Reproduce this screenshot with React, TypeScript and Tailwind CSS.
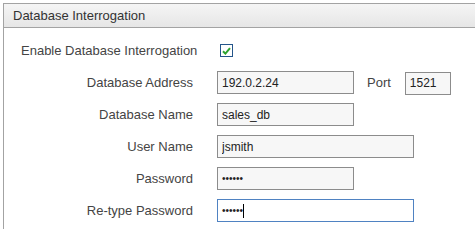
import React from "react";

const font = { fontFamily: '"Liberation Sans", Arial, sans-serif' };

function Row({ label, children }: { label: string; children: React.ReactNode }) {
  return (
    <div className="flex h-[23px] items-center">
      <label className="w-[189px] shrink-0 text-right text-[13px] text-[#444]">{label}</label>
      <div className="ml-[24px] flex h-full items-center">{children}</div>
    </div>
  );
}

function Field({ value, width, small = false, type = "text" }: { value: string; width: string; small?: boolean; type?: string }) {
  return (
    <input
      type={type}
      defaultValue={value}
      className={`${width} ${small ? "text-[10px]" : "text-[12px]"} h-[23px] border border-[#8c8c8c] bg-[#f7f7f7] px-[4px] text-[#222] outline-none`}
      style={font}
    />
  );
}

export default function App() {
  return (
    <div className="min-h-screen bg-white pl-[3px] pt-[3px]" style={font}>
      <div className="h-[226px] border-l border-t border-[#a3a3a3]">
        {/* panel header */}
        <div className="flex h-[24px] items-center border-b border-[#a3a3a3] bg-gradient-to-b from-[#f5f5f5] to-[#e6e6e6] pl-[9px] text-[13px] text-[#333]">
          Database Interrogation
        </div>

        <div className="flex flex-col gap-[9px] pt-[11px]">
          <div className="flex h-[23px] items-center">
            <span className="w-[189px] shrink-0 whitespace-nowrap pl-[17px] text-[13px] text-[#444]">Enable Database Interrogation</span>
            <span className="ml-[27px] flex h-[13px] w-[13px] items-center justify-center border border-[#24558a] bg-white">
              <svg width="9" height="8" viewBox="0 0 9 8">
                <path d="M1 4.2 L3.4 6.6 L8 1.2" fill="none" stroke="#2ea32e" strokeWidth="2" />
              </svg>
            </span>
          </div>

          <Row label="Database Address">
            <Field value="192.0.2.24" width="w-[137px]" />
            <span className="ml-[13px] text-[13px] text-[#444]">Port</span>
            <span className="ml-[14px]">
              <Field value="1521" width="w-[46px]" />
            </span>
          </Row>

          <Row label="Database Name">
            <Field value="sales_db" width="w-[137px]" />
          </Row>

          <Row label="User Name">
            <Field value="jsmith" width="w-[197px]" />
          </Row>

          <Row label="Password">
            <Field value="secret" type="password" small width="w-[137px]" />
          </Row>

          <Row label="Re-type Password">
            <div className="flex h-[23px] w-[197px] items-center border border-[#4f82c2] bg-white px-[4px] text-[10px] text-[#222]">
              <span>••••••</span>
              <span className="h-[14px] w-px bg-black" />
            </div>
          </Row>
        </div>
      </div>
    </div>
  );
}
